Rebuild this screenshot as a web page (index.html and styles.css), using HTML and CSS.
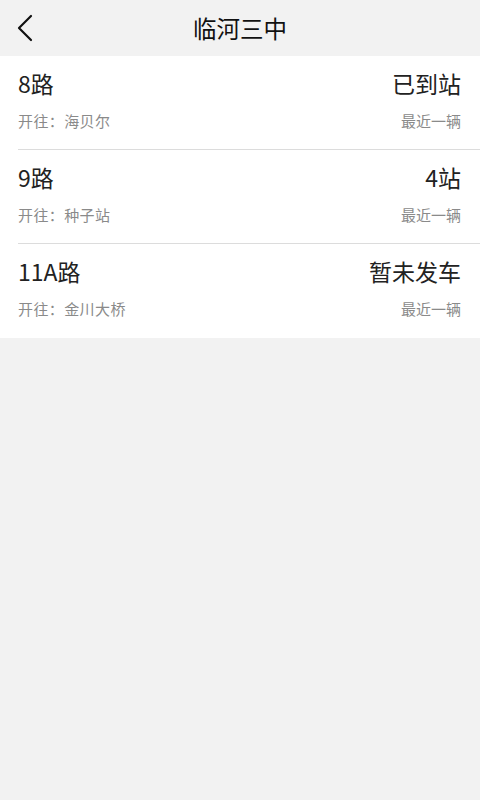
FILE: index.html
```html
<!DOCTYPE html>
<html lang="zh-CN">
<head>
<meta charset="utf-8">
<link rel="stylesheet" href="styles.css">
</head>
<body>
<div class="page">
  <header class="topbar">
    <span class="back">
      <svg width="18" height="28" viewBox="0 0 18 28"><path d="M15 2 L3 14 L15 26" fill="none" stroke="#111" stroke-width="2.2" stroke-linecap="round" stroke-linejoin="round"/></svg>
    </span>
    <h1 class="title">临河三中</h1>
  </header>
  <ul class="list">
    <li class="row">
      <div class="line main"><span>8路</span><span>已到站</span></div>
      <div class="line sub"><span>开往：海贝尔</span><span>最近一辆</span></div>
    </li>
    <li class="row">
      <div class="line main"><span>9路</span><span>4站</span></div>
      <div class="line sub"><span>开往：种子站</span><span>最近一辆</span></div>
    </li>
    <li class="row last">
      <div class="line main"><span>11A路</span><span>暂未发车</span></div>
      <div class="line sub"><span>开往：金川大桥</span><span>最近一辆</span></div>
    </li>
  </ul>
</div>
</body>
</html>
```
FILE: styles.css
```css
html, body {
  margin: 0;
  padding: 0;
  background: #f2f2f2;
  font-family: "Noto Sans CJK SC", "Noto Sans", sans-serif;
}
.page {
  width: 480px;
  min-height: 800px;
  background: #f2f2f2;
}
.topbar {
  position: relative;
  height: 56px;
  display: flex;
  align-items: center;
  justify-content: center;
}
.back {
  position: absolute;
  left: 16px;
  top: 14px;
  display: flex;
}
.title {
  margin: 0;
  font-size: 23.5px;
  font-weight: 400;
  color: #111;
  line-height: 56px;
}
.list {
  list-style: none;
  margin: 0;
  padding: 0 0 0 18px;
  background: #fff;
}
.row {
  height: 94px;
  box-sizing: border-box;
  padding: 11px 19px 0 0;
  border-bottom: 1px solid #dcdcdc;
}
.row.last {
  border-bottom: none;
}
.line {
  display: flex;
  justify-content: space-between;
}
.main {
  font-size: 23px;
  line-height: 32px;
  color: #222;
}
.sub {
  margin-top: 12px;
  font-size: 15px;
  line-height: 20px;
  color: #8a8a8a;
  letter-spacing: 0.4px;
}
.sub span:last-child {
  letter-spacing: 0;
}
```
